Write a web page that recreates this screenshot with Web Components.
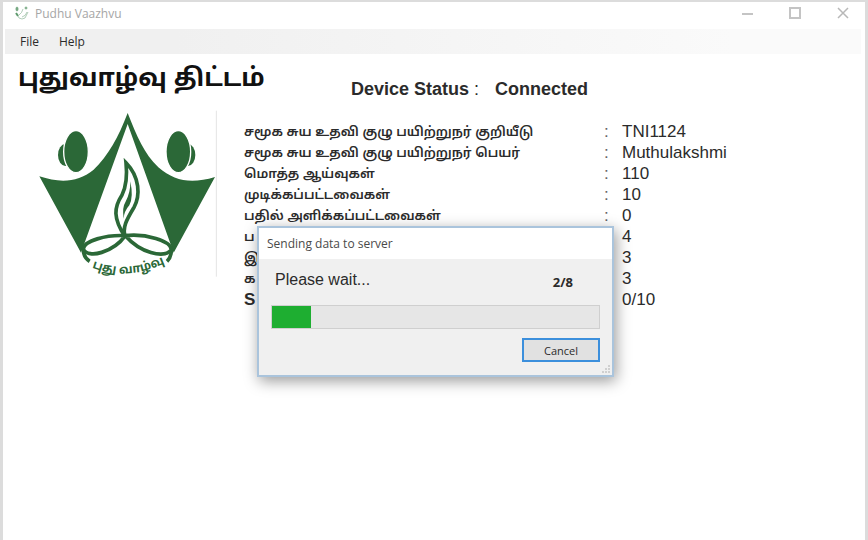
<!DOCTYPE html>
<html lang="ta">
<head>
<meta charset="utf-8">
<title>Pudhu Vaazhvu</title>
<style>
  body {
    margin: 0;
    color: #2b2b2b;
    background: #fff;
    font-family: "Liberation Sans", "Noto Sans Tamil", sans-serif;
  }
</style>
</head>
<body>
<app-window caption="Pudhu Vaazhvu">
  <menu-bar slot="menu"></menu-bar>
  <status-header heading="புதுவாழ்வு திட்டம்" status="Connected"></status-header>
  <survey-summary></survey-summary>
  <progress-dialog slot="dialog" caption="Sending data to server" step="2" total="8">Please wait...</progress-dialog>
</app-window>

<script>
class AppWindow extends HTMLElement {
  constructor() {
    super();

    const shadowRoot = this.attachShadow({ mode: 'open' });
    shadowRoot.innerHTML = `
      <style>
        :host {
          display: block;
          position: relative;
          box-sizing: border-box;
          min-height: 100vh;
          border: solid #dcdcdc;
          border-width: 2px 3px 0;
          background: #fff;
        }

        header {
          display: flex;
          align-items: center;
          height: 22px;
          padding: 0 14px 3px 11px;
          color: #a6a6a6;
          font: 12px "Open Sans", sans-serif;
        }

        header > svg {
          margin-right: 5px;
        }

        .buttons {
          display: flex;
          gap: 32px;
          margin-left: auto;
        }

        button {
          display: flex;
          padding: 0;
          border: 0;
          background: none;
        }
      </style>
      <header>
        <svg width="16" height="16" viewBox="0 0 16 16" fill="none" stroke="#7fae8b">
          <path d="M3 9l2 4Q8 15 11 13l3-6M5 10Q8 8 9 4M8 12Q12 11 13 7" stroke-width="1" opacity=".6"/>
          <ellipse cx="3" cy="4" rx="1" ry="2" fill="#5e9a6d"/>
          <ellipse cx="12" cy="3" rx="1" ry="1" fill="#7fae8b"/>
          <path d="M2 8l2 3" stroke="#5e9a6d" stroke-width="2"/>
        </svg>
        <span>${this.getAttribute('caption')}</span>
        <div class="buttons">
          <button aria-label="Minimize"><svg width="16" height="16" stroke="#c4c4c4" stroke-width="2"><path d="M3 9h11"/></svg></button>
          <button aria-label="Maximize"><svg width="16" height="16" stroke="#c4c4c4" stroke-width="2" fill="none"><path d="M3 3h10v10H3z"/></svg></button>
          <button aria-label="Close"><svg width="16" height="16" stroke="#b8b8b8" stroke-width="1.500"><path d="M3 3l10 10M13 3L3 13"/></svg></button>
        </div>
      </header>
      <slot name="menu"></slot>
      <main><slot></slot></main>
      <slot name="dialog"></slot>
    `;
  }
}

class MenuBar extends HTMLElement {
  constructor() {
    super();

    const shadowRoot = this.attachShadow({ mode: 'open' });
    shadowRoot.innerHTML = `
      <style>
        :host {
          display: flex;
          gap: 20px;
          height: 25px;
          margin: 2px 4px 0 2px;
          padding-left: 15px;
          background: linear-gradient(90deg, #f0f0f0 20%, #fafafa 85%);
        }

        button {
          padding: 0;
          border: 0;
          background: none;
          color: #2b2b2b;
          font: 12px "Open Sans", sans-serif;
        }
      </style>
      <button>File</button>
      <button>Help</button>
    `;
  }
}

class StatusHeader extends HTMLElement {
  constructor() {
    super();

    const shadowRoot = this.attachShadow({ mode: 'open' });
    shadowRoot.innerHTML = `
      <style>
        :host {
          display: grid;
          grid-template-columns: 333px 1fr;
          height: 50px;
          padding-left: 15px;
        }

        h1 {
          margin: 6px 0 0;
          color: #111;
          font-size: 25px;
          line-height: 34px;
          white-space: nowrap;
        }

        p {
          display: flex;
          gap: 16px;
          margin: 24px 0 0;
          font-size: 18px;
          line-height: 22px;
        }
      </style>
      <h1>${this.getAttribute('heading')}</h1>
      <p><span><b>Device Status</b> :</span> <b>${this.getAttribute('status')}</b></p>
    `;
  }
}

class SchemeLogo extends HTMLElement {
  constructor() {
    super();

    const shadowRoot = this.attachShadow({ mode: 'open' });
    shadowRoot.innerHTML = `
      <style>
        :host {
          display: block;
        }

        svg {
          display: block;
        }

        text {
          font-weight: bold;
          font-size: 36px;
        }
      </style>
      <svg width="200" height="180" viewBox="0 0 600 540" fill="#2b6837">
        <path d="M293 27C265 100 235 155 190 198C145 235 90 238 28 217L153 446L293 60L431 446L555 219C485 240 435 233 385 190C343 150 320 95 293 27Z"/>
        <ellipse cx="106" cy="153" rx="22" ry="33"/>
        <ellipse cx="474" cy="153" rx="22" ry="33"/>
        <g stroke="#fff" stroke-width="4">
          <ellipse cx="138" cy="143" rx="37" ry="63"/>
          <ellipse cx="445" cy="143" rx="37" ry="63"/>
        </g>
        <g fill="none" stroke="#2b6837" stroke-width="11">
          <path d="M286 400C248 342 252 310 276 273C290 245 292 215 288 176C330 219 331 275 312 310C290 347 276 370 286 400Z"/>
          <path d="M286 395C230 392 160 410 160 436C175 465 250 445 286 395Z"/>
          <path d="M286 395C345 388 425 410 424 438C400 465 330 445 286 395Z"/>
          <path d="M160 436Q160 460 179 472M424 438Q424 460 411 472"/>
        </g>
        <path d="M301 232Q302 265 286 295Q276 310 281 344Q282 322 298 304Q311 280 301 232Z"/>
        <path id="curve" d="M186 491Q294 531 408 476" fill="none"/>
        <text><textPath href="#curve">புது வாழ்வு</textPath></text>
        <path d="M559 20V518" stroke="#e4e4e4" stroke-width="3"/>
      </svg>
    `;
  }
}

class SurveySummary extends HTMLElement {
  constructor() {
    super();

    this.rows = [
      ['சமூக சுய உதவி குழு பயிற்றுநர் குறியீடு', 'TNI1124'],
      ['சமூக சுய உதவி குழு பயிற்றுநர் பெயர்', 'Muthulakshmi'],
      ['மொத்த ஆய்வுகள்', '110'],
      ['முடிக்கப்பட்டவைகள்', '10'],
      ['பதில் அளிக்கப்பட்டவைகள்', '0'],
      ['ப', '4'],
      ['இ', '3'],
      ['க', '3'],
      ['S', '0/10']
    ];

    const shadowRoot = this.attachShadow({ mode: 'open' });
    shadowRoot.innerHTML = `
      <style>
        :host {
          display: grid;
          grid-template-columns: 214px 1fr;
          padding: 0 0 0 27px;
        }

        table {
          width: 100%;
          margin-top: 17px;
          border-collapse: collapse;
          table-layout: fixed;
        }

        th, td {
          height: 21px;
          padding: 0;
          line-height: 21px;
          text-align: left;
          white-space: nowrap;
        }

        th {
          width: 360px;
          font-size: 13px;
          font-weight: 600;
        }

        th.latin {
          font-size: 17px;
        }

        td {
          font-size: 17px;
        }

        .colon {
          width: 18px;
          color: #666;
        }
      </style>
      <scheme-logo></scheme-logo>
      <table>
        ${this.rows.map(([label, value]) => `
          <tr>
            <th scope="row" class="${label === 'S' ? 'latin' : ''}">${label}</th>
            <td class="colon">:</td>
            <td>${value}</td>
          </tr>
        `).join('')}
      </table>
    `;
  }
}

class ProgressDialog extends HTMLElement {
  constructor() {
    super();

    const step = this.getAttribute('step');
    const total = this.getAttribute('total');

    const shadowRoot = this.attachShadow({ mode: 'open' });
    shadowRoot.innerHTML = `
      <style>
        :host {
          position: absolute;
          top: 224px;
          left: 254px;
          box-sizing: border-box;
          width: 357px;
          border: 2px solid #aac4dc;
          background: #f0f0f0;
          box-shadow: 2px 4px 14px rgba(0, 0, 0, 0.4);
        }

        h2 {
          margin: 0;
          padding: 0 8px;
          background: #fff;
          color: #4a4a4a;
          font: 12px/31px "Open Sans", sans-serif;
        }

        .body {
          padding: 10px 12px 13px;
        }

        .message {
          display: flex;
          justify-content: space-between;
          padding: 0 27px 0 4px;
          font-size: 16px;
          line-height: 22px;
        }

        .message b {
          padding-top: 3px;
          font: bold 13px/20px "Open Sans", sans-serif;
        }

        .bar {
          height: 22px;
          margin-top: 13px;
          border: 1px solid #cfcfcf;
          background: #e6e6e6;
        }

        .fill {
          width: 12%;
          height: 100%;
          background: #1eae31;
        }

        button {
          display: block;
          width: 78px;
          height: 24px;
          margin: 9px 0 0 auto;
          padding: 0;
          border: 2px solid #3c8fdc;
          background: #e1e1e1;
          color: #2b2b2b;
          font: 11px "Open Sans", sans-serif;
        }

        .grip {
          position: absolute;
          right: 1px;
          bottom: 1px;
        }
      </style>
      <h2>${this.getAttribute('caption')}</h2>
      <div class="body">
        <div class="message"><slot></slot><b>${step}/${total}</b></div>
        <div class="bar" role="progressbar" aria-label="Sending data" aria-valuenow="${step}" aria-valuemax="${total}"><div class="fill"></div></div>
        <button>Cancel</button>
      </div>
      <svg class="grip" width="10" height="10" fill="#d0d0d0"><path d="M7 1h2v2H7zM4 4h2v2H4zM7 4h2v2H7zM1 7h2v2H1zM4 7h2v2H4zM7 7h2v2H7z"/></svg>
    `;
    this.button = this.shadowRoot.querySelector('button');

    this.handleCancel = this.handleCancel.bind(this);
  }

  connectedCallback() {
    this.button.addEventListener('click', this.handleCancel);
  }

  handleCancel() {
    this.remove();
  }
}

customElements.define('app-window', AppWindow);
customElements.define('menu-bar', MenuBar);
customElements.define('status-header', StatusHeader);
customElements.define('scheme-logo', SchemeLogo);
customElements.define('survey-summary', SurveySummary);
customElements.define('progress-dialog', ProgressDialog);
</script>
</body>
</html>
